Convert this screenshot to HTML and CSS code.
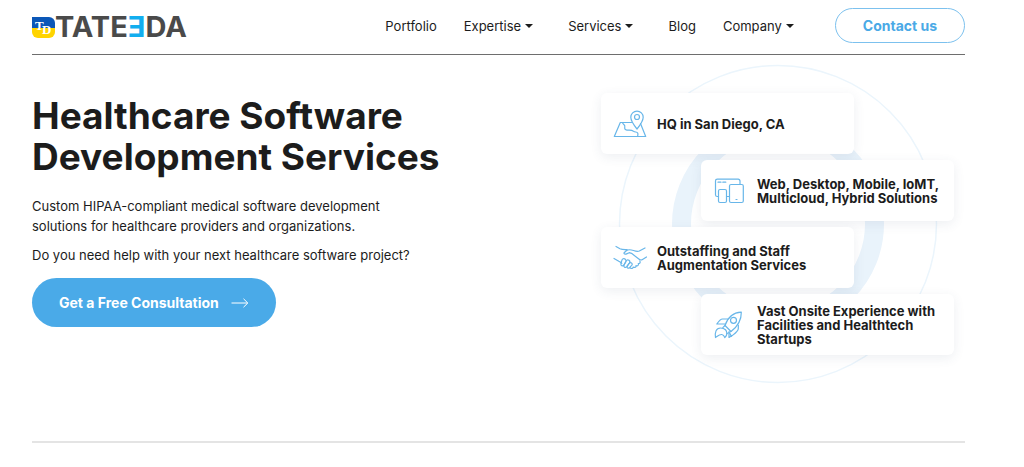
FILE: index.html
```html
<!DOCTYPE html>
<html lang="en">
<head>
<meta charset="utf-8">
<meta name="viewport" content="width=device-width, initial-scale=1">
<title>TATEEDA – Healthcare Software Development Services</title>
<link rel="stylesheet" href="styles.css">
</head>
<body>
<div class="page">
  <header class="header">
    <a class="logo" href="#" aria-label="TATEEDA">
      <svg class="logo-mark" viewBox="0 0 23 21" aria-hidden="true">
        <path fill="#0b57b7" d="M0 0h17a6 6 0 0 1 6 6v5H0z"/>
        <path fill="#ffd400" d="M0 11h23v4a6 6 0 0 1-6 6H6a6 6 0 0 1-6-6z"/>
        <text class="logo-initial" x="3" y="13">T</text>
        <text class="logo-initial" x="10" y="17">D</text>
      </svg>
      <span class="logo-word">TATE<span class="logo-accent">Ǝ</span>DA</span>
    </a>
    <nav class="nav">
      <a class="nav-link" href="#">Portfolio</a>
      <a class="nav-link nav-drop" href="#">Expertise</a>
      <a class="nav-link nav-drop" href="#">Services</a>
      <a class="nav-link" href="#">Blog</a>
      <a class="nav-link nav-drop" href="#">Company</a>
    </nav>
    <a class="contact" href="#">Contact us</a>
  </header>

  <main class="hero">
    <section class="intro">
      <h1 class="title">Healthcare Software<br>Development Services</h1>
      <p class="lead">Custom HIPAA-compliant medical software development<br>solutions for healthcare providers and organizations.</p>
      <p class="lead">Do you need help with your next healthcare software project?</p>
      <a class="cta" href="#">Get a Free Consultation
        <svg class="cta-arrow" viewBox="0 0 18 10" aria-hidden="true"><path d="M0.5 5h16M12.5 0.8 16.8 5l-4.300 4.200"/></svg>
      </a>
    </section>

    <section class="features">
      <svg class="rings" viewBox="0 0 320 320" aria-hidden="true">
        <circle class="ring-thin" cx="160" cy="160" r="158.500"/>
        <circle class="ring-thick" cx="160" cy="160" r="96.500"/>
      </svg>
      <ul class="cards">
        <li class="card">
          <svg class="icon" viewBox="0 0 34 30" aria-hidden="true">
            <path d="M18.500 13.500H7.300L1.300 27.500h31.400L27.500 14.500"/>
            <path d="M24 20c-3.500-4.300-6.200-8-6.200-11.700a6.200 6.200 0 0 1 12.400 0C30.200 12 27.500 15.700 24 20z"/>
            <circle cx="24" cy="8" r="2.500"/>
            <path d="M9.500 13.500c.3 2.300 2.800 1.800 2.300 4.300-.4 2 .2 3 2.200 3.300 2.800.3 4.500-.3 6.500 1.200 1.800 1.200 3.500.2 4.300 2 .4 1.400-.2 2-.1 3"/>
          </svg>
          <span class="card-text">HQ in San Diego, CA</span>
        </li>
        <li class="card card-right">
          <svg class="icon" viewBox="0 0 34 30" aria-hidden="true">
            <path d="M5.500 20.500H4.300A1.800 1.800 0 0 1 2.500 18.700V5A1.800 1.800 0 0 1 4.300 3.200h20.900A1.800 1.800 0 0 1 27 5v3.500M13.500 20.500h3"/>
            <path d="M5 6.200h3M9.800 6.200h3"/>
            <rect x="5.500" y="13.500" width="8" height="13" rx="1.500"/>
            <rect x="16.500" y="8.500" width="13.800" height="18" rx="1.500"/>
            <path d="M23 23.500h1"/>
          </svg>
          <span class="card-text">Web, Desktop, Mobile, IoMT,<br>Multicloud, Hybrid Solutions</span>
        </li>
        <li class="card">
          <svg class="icon" viewBox="0 0 34 30" aria-hidden="true">
            <path d="M3 3.500 7 5.700c2.300 1 4.600.8 7 1M32 5l-5.700 3c-2 .8-3.800.2-5.800-.5-3-1-5.300-1.200-7.200.2l-2.200 2c-.5 1.300 1.200 1.800 2.500 1.200l2.600-1.200 2.300.6 7 5.500c1.600 1.500 2.800 1.500 4 .7L33.500 14"/>
            <path d="M1 15.500l4.800 2.800c1.200.6 2 1 3 2"/>
            <path d="M12.300 16.200c-1.500-1.300-3.200-.2-3.600 1.600l-.8 3c-.3 2 1.600 2.700 2.900 1.500l2-3.300c.6-1.200.3-2-.5-2.800z"/>
            <path d="M16 17.300c-1.300-.8-2.500-.3-3.200 1.200l-1.800 3.500c-.9 2 1.400 3.200 2.800 1.700l2.600-3.500c.8-1.200.6-2.200-.4-2.900z"/>
            <path d="M18.500 20c-1-.7-2-.3-2.700.8l-1.600 2.400c-.7 1.700 1 2.500 2.300 1.500l2.200-2.300c.8-.9.600-1.800-.2-2.400zM17.200 24.800c1.500 1.300 2.900.7 2.900-.8 1.700 1 3.300.2 2.900-1.400 1.700.7 3-.5 2.300-2 1.500 0 2.500-1.200 1.500-2.600"/>
          </svg>
          <span class="card-text">Outstaffing and Staff<br>Augmentation Services</span>
        </li>
        <li class="card card-right">
          <svg class="icon" viewBox="0 0 34 30" aria-hidden="true">
            <path d="M12 15.500C14.500 8 19 2.700 28.300 2.200 28.500 10 24.500 16.500 18 21.500z"/>
            <circle cx="20.500" cy="10.300" r="3"/>
            <path d="M15 9H9.500C7.500 9 5.500 11.500 3.800 14H12M25.300 15v3.500c0 3-3.500 5-7 7.800l-2.300-4.600M12 15.500l-2.200 2.200M18 21.500l-4 2"/>
            <path d="M2.500 27.500c-.8-5 .5-9.500 5-9.500s6.800 2.700 6.300 6.200c-.2 1.300-1 2.400-2 3.300-.7-1.800-1.500-2.800-3-3-2.400-.2-3.800 1.300-6.300 3zM16 23v4.500l3-2"/>
          </svg>
          <span class="card-text">Vast Onsite Experience with<br>Facilities and Healthtech<br>Startups</span>
        </li>
      </ul>
    </section>
  </main>
</div>
</body>
</html>
```
FILE: styles.css
```css
* {
  box-sizing: border-box;
}

body {
  margin: 0;
  background: #fff;
  color: #1c1c1c;
  font-family: Inter, "Open Sans", sans-serif;
  font-size: 13px;
}

a {
  color: inherit;
  text-decoration: none;
}

.page {
  padding: 0 59px 0 32px;
}

.header {
  display: flex;
  align-items: center;
  padding: 8px 0 11px;
  border-bottom: 1px solid #6e6e6e;
}

.logo {
  display: flex;
  align-items: center;
  margin-right: auto;
  padding-top: 3px;
}

.logo-mark {
  width: 23px;
  height: 21px;
}

.logo-initial {
  fill: #fff;
  font-family: "Liberation Serif", serif;
  font-size: 13px;
  font-weight: 700;
}

.logo-word {
  color: #4a4a4a;
  font-size: 29px;
  font-weight: 700;
  line-height: 32px;
}

.logo-accent {
  color: #12aeef;
}

.nav {
  display: flex;
  gap: 27px;
  margin-right: 41px;
}

.nav-link {
  line-height: 20px;
}

.nav-drop {
  display: flex;
  align-items: center;
  gap: 4px;
}

.nav-drop:not(:last-child) {
  padding-right: 8px;
}

.nav-drop::after {
  content: "";
  border: 4px solid transparent;
  border-top-color: #1c1c1c;
  border-bottom: 0;
}

.contact {
  padding: 7px 27px;
  border: 1px solid #7cc1ee;
  border-radius: 18px;
  color: #4aa9e6;
  font-size: 14px;
  font-weight: 700;
  line-height: 19px;
}

.hero {
  display: flex;
  justify-content: space-between;
  padding: 38px 11px 86px 0;
  border-bottom: 2px solid #e4e4e4;
}

.title {
  margin: 2px 0 19px;
  font-size: 37px;
  font-weight: 700;
  line-height: 41px;
}

.lead {
  margin: 0 0 9px;
  line-height: 20px;
}

.cta {
  display: inline-flex;
  align-items: center;
  gap: 12px;
  margin-top: 4px;
  padding: 14px 27px;
  border-radius: 25px;
  background: #4aaae8;
  color: #fff;
  font-size: 14px;
  font-weight: 700;
  line-height: 21px;
}

.cta-arrow {
  width: 18px;
  height: 10px;
  fill: none;
  stroke: #fff;
  stroke-width: 1;
}

.features {
  position: relative;
  width: 353px;
}

.rings {
  position: absolute;
  top: 50%;
  left: 50%;
  width: 320px;
  height: 320px;
  transform: translate(-50%, -50%);
  fill: none;
}

.ring-thin {
  stroke: #ebf5fc;
  stroke-width: 1.5;
}

.ring-thick {
  stroke: #e9f3fb;
  stroke-width: 19;
}

.cards {
  position: relative;
  display: flex;
  flex-direction: column;
  gap: 6px;
  margin: 0;
  padding: 0;
  list-style: none;
}

.card {
  display: flex;
  align-items: center;
  gap: 10px;
  width: 253px;
  min-height: 61px;
  padding: 0 8px 0 12px;
  border-radius: 6px;
  background: #fff;
  box-shadow: 0 3px 12px rgba(60, 80, 110, 0.09);
}

.card-right {
  align-self: flex-end;
}

.icon {
  flex: none;
  width: 34px;
  height: 30px;
  fill: none;
  stroke: #68b6e9;
  stroke-width: 1.2;
  stroke-linecap: round;
  stroke-linejoin: round;
}

.card-text {
  font-weight: 700;
  line-height: 14px;
}
```
